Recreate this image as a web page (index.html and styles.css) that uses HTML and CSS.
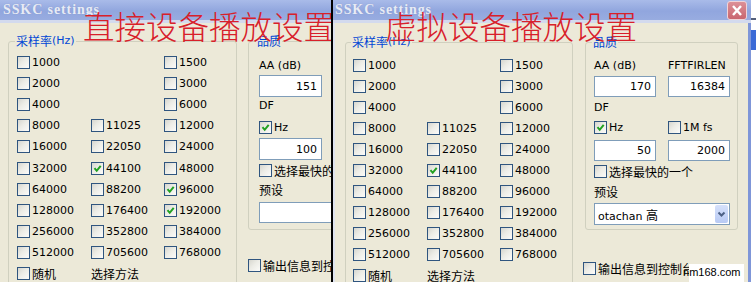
FILE: index.html
```html
<!DOCTYPE html>
<html lang="zh-CN">
<head>
<meta charset="utf-8">
<title>SSKC settings</title>
<link rel="stylesheet" href="styles.css">
</head>
<body>
<div class="screen">
  <section class="win win-left">
    <div class="titlebar"><span class="title">SSKC settings</span></div>
    <div class="body">
      <fieldset class="group rates">
        <legend><span class="zh">采样率</span><span>(Hz)</span></legend>
        <div class="grid">
          <label class="cb"><span class="box"></span>1000</label><span></span><label class="cb"><span class="box"></span>1500</label>
          <label class="cb"><span class="box"></span>2000</label><span></span><label class="cb"><span class="box"></span>3000</label>
          <label class="cb"><span class="box"></span>4000</label><span></span><label class="cb"><span class="box"></span>6000</label>
          <label class="cb"><span class="box"></span>8000</label><label class="cb"><span class="box"></span>11025</label><label class="cb"><span class="box"></span>12000</label>
          <label class="cb"><span class="box"></span>16000</label><label class="cb"><span class="box"></span>22050</label><label class="cb"><span class="box"></span>24000</label>
          <label class="cb"><span class="box"></span>32000</label><label class="cb"><span class="box on"><svg viewBox="0 0 11 11"><path d="M2.5 5.2l2.2 2.6 4-5"/></svg></span>44100</label><label class="cb"><span class="box"></span>48000</label>
          <label class="cb"><span class="box"></span>64000</label><label class="cb"><span class="box"></span>88200</label><label class="cb"><span class="box on"><svg viewBox="0 0 11 11"><path d="M2.5 5.2l2.2 2.6 4-5"/></svg></span>96000</label>
          <label class="cb"><span class="box"></span>128000</label><label class="cb"><span class="box"></span>176400</label><label class="cb"><span class="box on"><svg viewBox="0 0 11 11"><path d="M2.5 5.2l2.2 2.6 4-5"/></svg></span>192000</label>
          <label class="cb"><span class="box"></span>256000</label><label class="cb"><span class="box"></span>352800</label><label class="cb"><span class="box"></span>384000</label>
          <label class="cb"><span class="box"></span>512000</label><label class="cb"><span class="box"></span>705600</label><label class="cb"><span class="box"></span>768000</label>
          <label class="cb"><span class="box"></span><span class="zh">随机</span></label><span class="txt zh">选择方法</span><span></span>
        </div>
      </fieldset>
      <div class="side">
        <fieldset class="group quality">
          <legend><span class="zh">品质</span></legend>
          <div class="q-row r-aa"><span class="lbl">AA (dB)</span></div>
          <div class="q-row r-in1"><input class="field" type="text" value="151" readonly></div>
          <div class="q-lbl r-df">DF</div>
          <div class="q-row r-hz"><label class="cb"><span class="box on"><svg viewBox="0 0 11 11"><path d="M2.5 5.2l2.2 2.6 4-5"/></svg></span>Hz</label></div>
          <div class="q-row r-in2"><input class="field" type="text" value="100" readonly></div>
          <label class="cb r-fast"><span class="box"></span><span class="zh">选择最快的一个</span></label>
          <div class="q-lbl r-preset"><span class="zh">预设</span></div>
          <input class="field wide r-combo" type="text" value="" readonly>
        </fieldset>
        <label class="cb out"><span class="box"></span><span class="zh">输出信息到控制台</span></label>
      </div>
    </div>
    <div class="overlay">直接设备播放设置</div>
  </section>
  <div class="sep"></div>
  <section class="win win-right">
    <div class="titlebar">
      <span class="title">SSKC settings</span>
      <span class="close"><svg viewBox="0 0 18 17"><path d="M5 4l8 9M13 4l-8 9"/></svg></span>
    </div>
    <div class="body">
      <fieldset class="group rates">
        <legend><span class="zh">采样率</span><span>(Hz)</span></legend>
        <div class="grid">
          <label class="cb"><span class="box"></span>1000</label><span></span><label class="cb"><span class="box"></span>1500</label>
          <label class="cb"><span class="box"></span>2000</label><span></span><label class="cb"><span class="box"></span>3000</label>
          <label class="cb"><span class="box"></span>4000</label><span></span><label class="cb"><span class="box"></span>6000</label>
          <label class="cb"><span class="box"></span>8000</label><label class="cb"><span class="box"></span>11025</label><label class="cb"><span class="box"></span>12000</label>
          <label class="cb"><span class="box"></span>16000</label><label class="cb"><span class="box"></span>22050</label><label class="cb"><span class="box"></span>24000</label>
          <label class="cb"><span class="box"></span>32000</label><label class="cb"><span class="box on"><svg viewBox="0 0 11 11"><path d="M2.5 5.2l2.2 2.6 4-5"/></svg></span>44100</label><label class="cb"><span class="box"></span>48000</label>
          <label class="cb"><span class="box"></span>64000</label><label class="cb"><span class="box"></span>88200</label><label class="cb"><span class="box"></span>96000</label>
          <label class="cb"><span class="box"></span>128000</label><label class="cb"><span class="box"></span>176400</label><label class="cb"><span class="box"></span>192000</label>
          <label class="cb"><span class="box"></span>256000</label><label class="cb"><span class="box"></span>352800</label><label class="cb"><span class="box"></span>384000</label>
          <label class="cb"><span class="box"></span>512000</label><label class="cb"><span class="box"></span>705600</label><label class="cb"><span class="box"></span>768000</label>
          <label class="cb"><span class="box"></span><span class="zh">随机</span></label><span class="txt zh">选择方法</span><span></span>
        </div>
      </fieldset>
      <div class="side">
        <fieldset class="group quality">
          <legend><span class="zh">品质</span></legend>
          <div class="q-row r-aa"><span class="lbl">AA (dB)</span><span class="lbl">FFTFIRLEN</span></div>
          <div class="q-row r-in1"><input class="field" type="text" value="170" readonly><input class="field" type="text" value="16384" readonly></div>
          <div class="q-lbl r-df">DF</div>
          <div class="q-row r-hz"><label class="cb"><span class="box on"><svg viewBox="0 0 11 11"><path d="M2.5 5.2l2.2 2.6 4-5"/></svg></span>Hz</label><label class="cb"><span class="box"></span>1M fs</label></div>
          <div class="q-row r-in2"><input class="field" type="text" value="50" readonly><input class="field" type="text" value="2000" readonly></div>
          <label class="cb r-fast"><span class="box"></span><span class="zh">选择最快的一个</span></label>
          <div class="q-lbl r-preset"><span class="zh">预设</span></div>
          <div class="combo r-combo">
            <span class="combo-text">otachan <span class="zh">高</span></span>
            <span class="combo-btn"><svg viewBox="0 0 13 18"><path d="M3.5 7.5l3 3 3-3"/></svg></span>
          </div>
        </fieldset>
        <label class="cb out"><span class="box"></span><span class="zh">输出信息到控制台</span></label>
      </div>
    </div>
    <div class="overlay">虚拟设备播放设置</div>
  </section>
  <div class="edge"><span class="edge-line"></span><span class="edge-blue"></span></div>
  <div class="wm"><span class="wm-a">n</span><span class="wm-b">m168.com</span></div>
</div>
</body>
</html>
```

FILE: styles.css
```css
* { box-sizing: border-box; }
html, body { margin: 0; padding: 0; }
body {
  width: 756px;
  height: 282px;
  overflow: hidden;
  background: #fff;
  font-family: "DejaVu Sans", "Noto Sans CJK SC", sans-serif;
  font-size: 11px;
  color: #000;
}
.zh { font-family: "Noto Sans CJK SC", "DejaVu Sans", sans-serif; font-size: 12px; }

.screen { position: relative; display: flex; height: 282px; }
.win {
  position: relative;
  overflow: hidden;
  display: flex;
  flex-direction: column;
  flex: none;
  background: #ece9d8;
  height: 282px;
}
.win-left { width: 331px; }
.win-right { width: 418px; }
.sep { width: 2px; flex: none; background: #000; }

.titlebar {
  height: 23px;
  flex: none;
  border-bottom: 3px solid #d3daee;
  background: linear-gradient(#a9bbe9, #91a6de 55%, #98ace0);
  display: flex;
  align-items: center;
  justify-content: space-between;
  padding: 0 4px 0 3px;
}
.title {
  font-family: "Liberation Serif", serif;
  font-weight: bold;
  font-size: 14px;
  letter-spacing: 0.9px;
  color: #e7ebf5;
  text-shadow: 0 0 1px #8294c8;
  white-space: nowrap;
}
.win-right .titlebar { padding-left: 2px; }
.close {
  width: 20px;
  height: 19px;
  margin-top: 1px;
  border: 1px solid #efd4d8;
  border-radius: 3px;
  background: linear-gradient(#dc9097, #c9666f);
  display: flex;
}
.close svg { width: 18px; height: 17px; }
.close path { stroke: #fff; stroke-width: 2.4; fill: none; }

.body {
  flex: 1;
  display: flex;
  align-items: flex-start;
  padding-top: 11px;
  padding-left: 8px;
}
.win-right .body {
  padding-top: 12px;
  padding-left: 10px;
  border-left: 2px solid #dfe3ee;
  border-right: 3px solid #7f96d8;
}

.group {
  margin: 0;
  min-width: 0;
  border: 1px solid #d0d0bf;
  border-radius: 3px;
}
.group legend {
  color: #0046d5;
  height: 14px;
  line-height: 14px;
  padding: 0 1px;
  margin-left: -2px;
  display: flex;
  align-items: center;
}
.group legend span { line-height: 14px; }
.rates { width: 229px; padding: 4px 0 30px 8px; flex: none; }
.win-right .rates { width: 228px; padding: 6px 0 30px 7px; }

.grid {
  display: grid;
  grid-template-columns: 74px 73px 1fr;
  grid-auto-rows: 21.1px;
}
.win-right .grid { grid-auto-rows: 21px; }
.txt { display: flex; align-items: center; white-space: nowrap; }

.cb {
  display: flex;
  align-items: center;
  gap: 2px;
  white-space: nowrap;
  height: 100%;
}
.box {
  width: 13px;
  height: 13px;
  flex: none;
  border: 1px solid #2f557f;
  background: linear-gradient(135deg, #d6d6cf 0%, #ecece6 45%, #fbfbf9 100%);
  display: flex;
}
.box svg { width: 11px; height: 11px; }
.box path { stroke: #21a121; stroke-width: 2; fill: none; }

.side { display: flex; flex-direction: column; margin-left: 11px; flex: none; width: 153px; }
.win-right .side { margin-left: 12px; }
.quality { width: 153px; padding: 0 0 6px 10px; display: flex; flex-direction: column; }
.win-right .quality { padding: 0 0 4px 8px; }
.quality legend { margin-left: -3px; }
.win-right .quality legend { margin-left: -2px; }

.q-row { display: grid; grid-template-columns: 62px 62px; column-gap: 12px; }
.win-left .q-row { grid-template-columns: 63px 62px; column-gap: 11px; }
.lbl, .q-lbl { height: 16px; line-height: 16px; white-space: nowrap; display: flex; align-items: center; }
.field {
  display: block;
  width: 100%;
  height: 22px;
  margin: 0;
  border: 1px solid #7f9db9;
  background: #fff;
  padding: 0 4px 0 2px;
  text-align: right;
  font: inherit;
  color: #000;
  outline: none;
}
.field.wide { width: 136px; }

.r-aa { margin-top: 10px; }
.r-in1 { margin-top: 1px; }
.r-df { margin-top: 1px; }
.r-hz { margin-top: 3px; height: 20px; }
.r-in2 { margin-top: 1px; }
.r-fast { height: 20px; }
.r-preset { margin-top: 2px; }
.r-combo { margin-top: 4px; height: 21px; }

.win-right .r-aa { margin-top: 9px; }
.win-right .r-in1 { margin-top: 2px; }
.win-right .r-in1 .field, .win-right .r-in2 .field { height: 21px; }
.win-right .r-df { margin-top: 3px; }
.win-right .r-hz { margin-top: 1px; }
.win-right .r-in2 { margin-top: 3px; }
.win-right .r-preset { margin-top: 3px; }
.win-right .r-combo { margin-top: 3px; height: 22px; }

.combo {
  width: 136px;
  border: 1px solid #7f9db9;
  background: #fff;
  display: flex;
  align-items: center;
  padding: 1px;
}
.combo-text { padding-left: 2px; white-space: nowrap; }
.combo-btn {
  margin-left: auto;
  width: 13px;
  height: 18px;
  border-radius: 2px;
  background: linear-gradient(#d6e1fb, #b8caf4);
  display: flex;
}
.combo-btn svg { width: 13px; height: 18px; }
.combo-btn path { stroke: #4d6185; stroke-width: 2; fill: none; }

.out { height: 20px; margin-top: 25px; }
.win-right .out { margin-top: 28px; margin-left: -2px; }

.overlay {
  position: absolute;
  left: 83px;
  top: 10px;
  font-family: "Noto Sans CJK SC", sans-serif;
  font-weight: 300;
  font-size: 31.5px;
  line-height: 1;
  color: #d8202a;
  white-space: nowrap;
}
.win-right .overlay { left: 52px; top: 10px; }

.edge { flex: 1; background: #fff; display: flex; flex-direction: column; }
.edge-line { height: 2px; margin-top: 18px; background: #55607a; }
.edge-blue { height: 20px; margin-top: 10px; background: #3b6ad6; }

.wm {
  position: absolute;
  left: 683px;
  top: 264px;
  font-family: "Liberation Sans", sans-serif;
  font-size: 11px;
  line-height: 16px;
  color: #000;
  white-space: nowrap;
}
.wm-b { display: inline-block; background: #fff; padding-right: 4px; height: 18px; }
```
